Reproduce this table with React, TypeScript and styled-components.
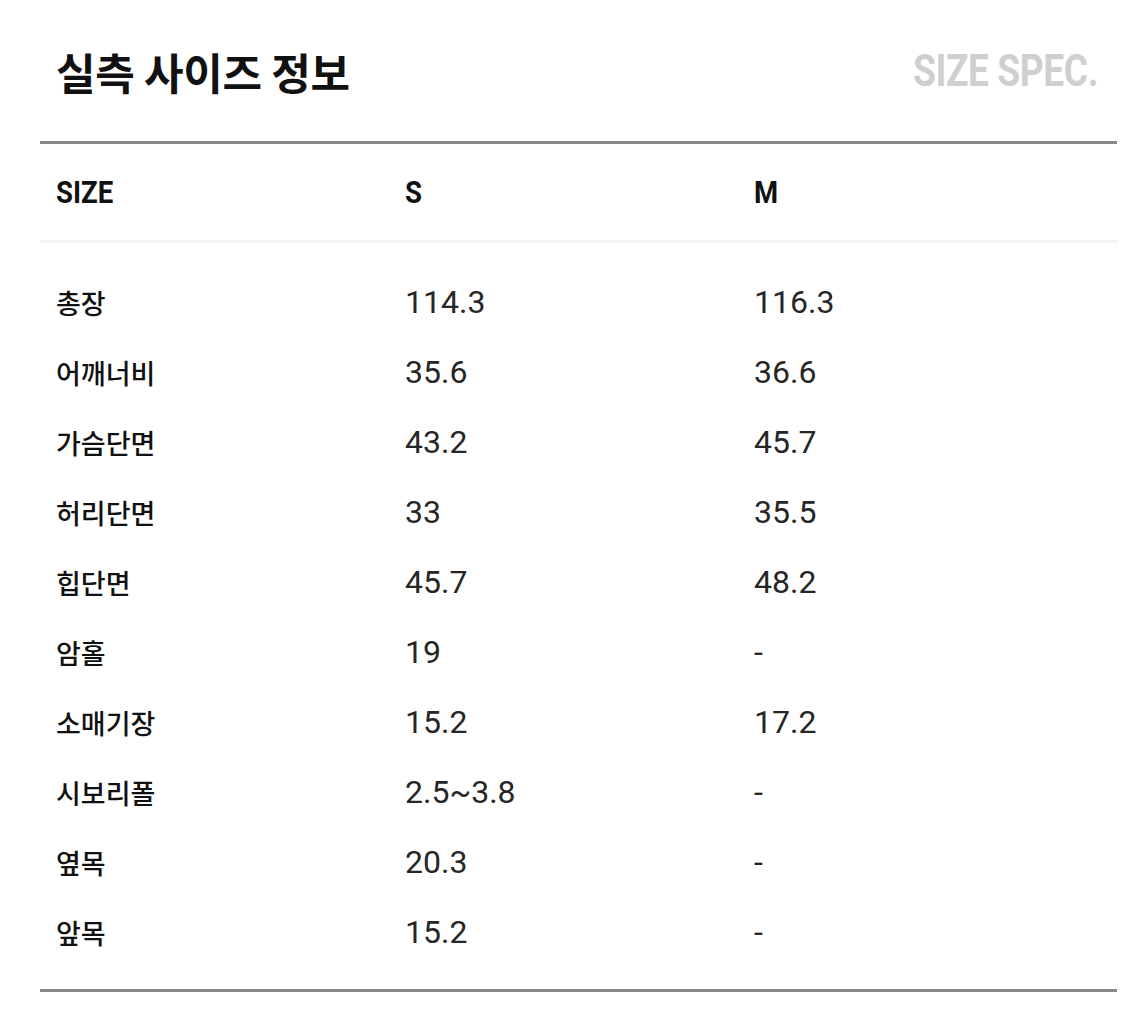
import styled, { createGlobalStyle } from 'styled-components';

const GlobalStyle = createGlobalStyle`
  html, body {
    margin: 0;
    padding: 0;
    background: #fff;
  }
  body {
    font-family: Roboto, "Noto Sans CJK KR", sans-serif;
    color: #222;
  }
`;

const Page = styled.div`
  width: 1125px;
  padding: 40px 8px 0 40px;
  box-sizing: border-box;
`;

const TitleBar = styled.div`
  display: flex;
  justify-content: space-between;
  align-items: center;
  padding: 0 19px 0 16px;
  height: 62px;
  margin-bottom: 39px;
`;

const Title = styled.h2`
  margin: 0;
  font-family: "Noto Sans CJK KR", sans-serif;
  font-size: 43px;
  font-weight: 700;
  letter-spacing: -0.3px;
  color: #111;
`;

const Spec = styled.span`
  display: inline-block;
  font-family: Roboto, sans-serif;
  font-size: 44px;
  font-weight: 700;
  color: #cfcfcf;
  transform: scaleX(0.845);
  transform-origin: right center;
  letter-spacing: -0.5px;
`;

const Table = styled.div`
  border-top: 3px solid #888;
  border-bottom: 3px solid #888;
`;

const HeadRow = styled.div`
  display: grid;
  grid-template-columns: 349px 349px 1fr;
  height: 96px;
  align-items: center;
  padding-left: 16px;
  border-bottom: 3px solid #f2f2f2;
`;

const HeadCell = styled.span`
  display: inline-block;
  font-family: Roboto, sans-serif;
  font-size: 32px;
  font-weight: 700;
  color: #111;
  transform: scaleX(0.86);
  transform-origin: left center;
`;

const Body = styled.div`
  padding: 24px 0 22px;
`;

const Row = styled.div`
  display: grid;
  grid-template-columns: 349px 349px 1fr;
  height: 70px;
  align-items: center;
  padding-left: 16px;
`;

const Label = styled.span`
  font-family: "Noto Sans CJK KR", sans-serif;
  font-size: 27px;
  font-weight: 500;
  color: #111;
  letter-spacing: 0;
`;

const Value = styled.span`
  font-family: Roboto, "Noto Sans CJK KR", sans-serif;
  font-size: 32px;
  font-weight: 400;
  color: #262626;
`;

const rows: [string, string, string][] = [
  ['총장', '114.3', '116.3'],
  ['어깨너비', '35.6', '36.6'],
  ['가슴단면', '43.2', '45.7'],
  ['허리단면', '33', '35.5'],
  ['힙단면', '45.7', '48.2'],
  ['암홀', '19', '-'],
  ['소매기장', '15.2', '17.2'],
  ['시보리폴', '2.5~3.8', '-'],
  ['옆목', '20.3', '-'],
  ['앞목', '15.2', '-'],
];

export default function App() {
  return (
    <>
      <GlobalStyle />
      <Page>
        <TitleBar>
          <Title>실측 사이즈 정보</Title>
          <Spec>SIZE SPEC.</Spec>
        </TitleBar>
        <Table>
          <HeadRow>
            <div><HeadCell>SIZE</HeadCell></div>
            <div><HeadCell>S</HeadCell></div>
            <div><HeadCell>M</HeadCell></div>
          </HeadRow>
          <Body>
            {rows.map(([label, s, m]) => (
              <Row key={label}>
                <Label>{label}</Label>
                <Value>{s}</Value>
                <Value>{m}</Value>
              </Row>
            ))}
          </Body>
        </Table>
      </Page>
    </>
  );
}
